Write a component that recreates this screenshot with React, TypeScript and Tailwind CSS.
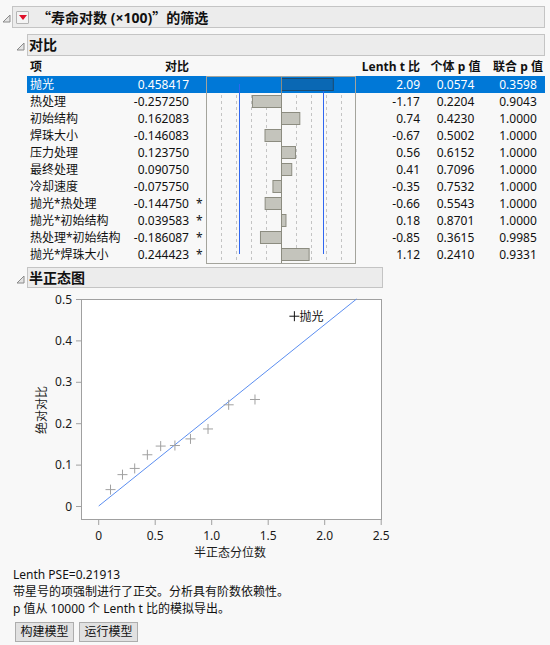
import React from 'react'

const rows = [
  { term: '抛光', c: '0.458417', v: 0.458417, t: '2.09', p1: '0.0574', p2: '0.3598', star: false },
  { term: '热处理', c: '-0.257250', v: -0.25725, t: '-1.17', p1: '0.2204', p2: '0.9043', star: false },
  { term: '初始结构', c: '0.162083', v: 0.162083, t: '0.74', p1: '0.4230', p2: '1.0000', star: false },
  { term: '焊珠大小', c: '-0.146083', v: -0.146083, t: '-0.67', p1: '0.5002', p2: '1.0000', star: false },
  { term: '压力处理', c: '0.123750', v: 0.12375, t: '0.56', p1: '0.6152', p2: '1.0000', star: false },
  { term: '最终处理', c: '0.090750', v: 0.09075, t: '0.41', p1: '0.7096', p2: '1.0000', star: false },
  { term: '冷却速度', c: '-0.075750', v: -0.07575, t: '-0.35', p1: '0.7532', p2: '1.0000', star: false },
  { term: '抛光*热处理', c: '-0.144750', v: -0.14475, t: '-0.66', p1: '0.5543', p2: '1.0000', star: true },
  { term: '抛光*初始结构', c: '0.039583', v: 0.039583, t: '0.18', p1: '0.8701', p2: '1.0000', star: true },
  { term: '热处理*初始结构', c: '-0.186087', v: -0.186087, t: '-0.85', p1: '0.3615', p2: '0.9985', star: true },
  { term: '抛光*焊珠大小', c: '0.244423', v: 0.244423, t: '1.12', p1: '0.2410', p2: '0.9331', star: true },
]

// half normal quantiles vs sorted |contrast|
const points = [
  [0.1046, 0.039583],
  [0.2104, 0.07575],
  [0.3186, 0.09075],
  [0.4307, 0.12375],
  [0.5485, 0.14475],
  [0.6745, 0.146083],
  [0.8122, 0.162083],
  [0.9674, 0.186087],
  [1.1503, 0.244423],
  [1.383, 0.25725],
]

function Disclosure() {
  return (
    <svg width="9" height="9" viewBox="0 0 9 9" className="block">
      <polygon points="8,1 8,8 1,8" fill="#e4e4e4" stroke="#8a8a8a" strokeWidth="1" />
    </svg>
  )
}

function ContrastChart() {
  const zero = 75
  const scale = 113
  const grid = [15, 30, 45, 60, 90, 105, 120, 135]
  return (
    <svg width="150" height="188" className="block">
      <rect x="0" y="0" width="150" height="188" fill="#f8f8f8" />
      {grid.map((g) => (
        <line key={g} x1={g + 0.5} x2={g + 0.5} y1="1" y2="187" stroke="#c4c4c4" strokeDasharray="3 3" />
      ))}
      <rect x="0" y="0" width="150" height="17" fill="#0078d7" />
      <line x1="33.5" x2="33.5" y1="8" y2="178" stroke="#2f66f0" strokeWidth="1" />
      <line x1="117.5" x2="117.5" y1="8" y2="178" stroke="#2f66f0" strokeWidth="1" />
      {rows.map((r, i) => {
        const w = Math.abs(r.v) * scale
        const x = r.v >= 0 ? zero : zero - w
        return (
          <rect
            key={r.term}
            x={x + 0.5}
            y={i * 17 + 2.5}
            width={w}
            height="12"
            fill={i === 0 ? '#0a68b4' : '#c4c4bc'}
            stroke={i === 0 ? '#1c4a6e' : '#8c8c80'}
            strokeWidth="1"
          />
        )
      })}
      <line x1={zero + 0.5} x2={zero + 0.5} y1="0" y2="188" stroke="#8c8c80" />
      <rect x="0.5" y="0.5" width="149" height="187" fill="none" stroke="#a4a49c" />
    </svg>
  )
}

function HalfNormalPlot() {
  const X = (q: number) => 98.7 + q * 113
  const Y = (v: number) => 216 - v * 414
  const yTicks = [0, 0.1, 0.2, 0.3, 0.4, 0.5]
  const xTicks = [0, 0.5, 1, 1.5, 2, 2.5]
  const cross = (x: number, y: number, color: string, key: string) => (
    <g key={key} stroke={color} strokeWidth="1">
      <line x1={x - 5} x2={x + 5} y1={y} y2={y} />
      <line x1={x} x2={x} y1={y - 5} y2={y + 5} />
    </g>
  )
  return (
    <svg width="400" height="272" className="block" fontSize="12">
      <rect x="81.5" y="9.5" width="300" height="220" fill="#ffffff" stroke="#a0a0a0" />
      {yTicks.map((t) => (
        <g key={t}>
          <line x1="76" x2="81" y1={Y(t) + 0.5} y2={Y(t) + 0.5} stroke="#a0a0a0" />
          <text x="72" y={Y(t)} textAnchor="end" dominantBaseline="central" fill="#1a1a1a">
            {t === 0 ? '0' : t.toFixed(1)}
          </text>
        </g>
      ))}
      {xTicks.map((t) => (
        <g key={t}>
          <line x1={X(t)} x2={X(t)} y1="230" y2="235" stroke="#a0a0a0" />
          <text x={X(t)} y="245" textAnchor="middle" dominantBaseline="central" fill="#1a1a1a">
            {t === 0 ? '0' : t.toFixed(1)}
          </text>
        </g>
      ))}
      <line x1={X(0)} y1={Y(0)} x2={X(0.5 / 0.21913)} y2={Y(0.5)} stroke="#5b8ef0" strokeWidth="1" />
      {points.map(([q, v], i) => cross(X(q), Y(v), '#a0a0a0', 'p' + i))}
      {cross(X(1.7317), Y(0.458417), '#111111', 'top')}
      <text x={X(1.7317) + 5} y={Y(0.458417)} dominantBaseline="central" fill="#111111">
        抛光
      </text>
      <text x="230" y="262" textAnchor="middle" dominantBaseline="central" fill="#1a1a1a">
        半正态分位数
      </text>
      <text
        x="0"
        y="0"
        transform="translate(41,120) rotate(-90)"
        textAnchor="middle"
        dominantBaseline="central"
        fill="#1a1a1a"
      >
        绝对对比
      </text>
    </svg>
  )
}

export default function App() {
  return (
    <div className="w-[550px] h-[645px] overflow-hidden bg-[#f8f8f8] pt-[6px] text-[#111] font-['Noto_Sans','Noto_Sans_CJK_SC',sans-serif]">
      {/* Top outline */}
      <div className="flex items-center pr-[5px]">
        <div className="w-[12px] pl-[2px] pt-[3px]">
          <Disclosure />
        </div>
        <div className="flex-1 h-[22px] border border-[#c4c4c4] bg-[#ececec] flex items-center pl-[3px] gap-[8px]">
          <div className="w-[13px] h-[13px] border border-[#b4b4b4] bg-[#f4f4f4] rounded-[1px] flex items-center justify-center">
            <svg width="8" height="5" viewBox="0 0 8 5" className="block">
              <polygon points="0,0 8,0 4,5" fill="#e0102a" />
            </svg>
          </div>
          <span className="text-[14px] font-bold leading-none whitespace-nowrap">
            <span className="font-['Noto_Sans_CJK_SC',sans-serif]">“</span>
            寿命对数 (×100)
            <span className="font-['Noto_Sans_CJK_SC',sans-serif]">”</span>
            的筛选
          </span>
        </div>
      </div>

      {/* 对比 */}
      <div className="flex items-center pr-[5px] mt-[6px]">
        <div className="w-[27px] pl-[16px] pt-[3px]">
          <Disclosure />
        </div>
        <div className="flex-1 h-[22px] border border-[#c4c4c4] bg-[#ececec] flex items-center pl-[1px]">
          <span className="text-[14px] font-bold leading-none">对比</span>
        </div>
      </div>

      <div className="flex ml-[27px] text-[12px]">
        {/* left: term + contrast */}
        <div className="w-[179px]">
          <div className="h-[20px] flex items-center pt-[2px] font-bold">
            <div className="w-[100px] pl-[3px]">项</div>
            <div className="w-[62px] text-right">对比</div>
          </div>
          {rows.map((r, i) => (
            <div
              key={r.term}
              className={`h-[17px] flex items-center ${i === 0 ? 'bg-[#0078d7] text-white' : ''}`}
            >
              <div className="w-[100px] pl-[3px] whitespace-nowrap">{r.term}</div>
              <div className="w-[62px] text-right">{r.c}</div>
              <div className="w-[17px] pl-[7px]">{r.star ? '*' : ''}</div>
            </div>
          ))}
        </div>

        {/* middle: bars */}
        <div className="w-[150px] pt-[20px]">
          <ContrastChart />
        </div>

        {/* right: stats */}
        <div className="w-[189px]">
          <div className="h-[20px] flex items-center pt-[2px] font-bold whitespace-nowrap">
            <div className="w-[64px] text-right">Lenth t 比</div>
            <div className="w-[71px] text-center">个体 p 值</div>
            <div className="w-[54px] text-center">联合 p 值</div>
          </div>
          {rows.map((r, i) => (
            <div
              key={r.term}
              className={`h-[17px] flex items-center ${i === 0 ? 'bg-[#0078d7] text-white' : ''}`}
            >
              <div className="w-[64px] text-right">{r.t}</div>
              <div className="w-[71px] text-center">{r.p1}</div>
              <div className="w-[54px] text-center">{r.p2}</div>
            </div>
          ))}
        </div>
      </div>

      {/* 半正态图 */}
      <div className="flex items-center mt-[3px]">
        <div className="w-[27px] pl-[16px] pt-[3px]">
          <Disclosure />
        </div>
        <div className="w-[356px] h-[21px] border border-[#c4c4c4] bg-[#ececec] flex items-center pl-[1px]">
          <span className="text-[14px] font-bold leading-none">半正态图</span>
        </div>
      </div>

      <div className="mt-[2px]">
        <HalfNormalPlot />
      </div>

      <div className="ml-[13px] mt-[4px] text-[12px] leading-[17px]">
        <div>Lenth PSE=0.21913</div>
        <div>带星号的项强制进行了正交。分析具有阶数依赖性。</div>
        <div>p 值从 10000 个 Lenth t 比的模拟导出。</div>
      </div>

      <div className="flex gap-[5px] ml-[15px] mt-[5px]">
        <button className="w-[59px] h-[20px] border border-[#adadad] bg-[#e1e1e1] text-[12px] leading-none">
          构建模型
        </button>
        <button className="w-[59px] h-[20px] border border-[#adadad] bg-[#e1e1e1] text-[12px] leading-none">
          运行模型
        </button>
      </div>
    </div>
  )
}
